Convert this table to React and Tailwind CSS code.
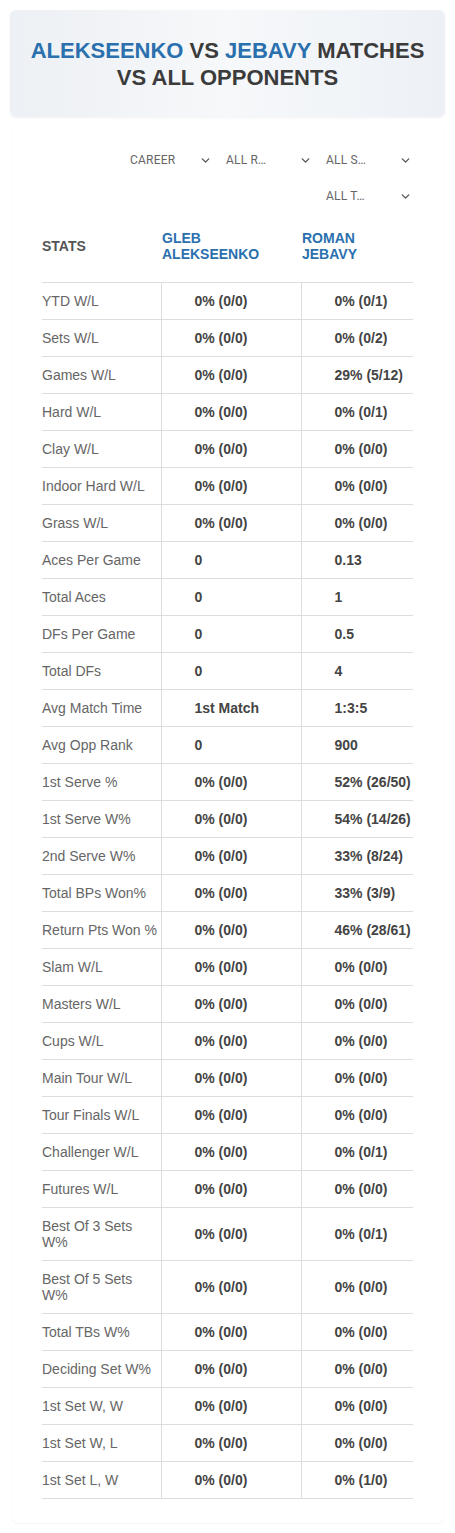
import React from "react";
import { ChevronDown } from "lucide-react";

const rows = [
  ["YTD W/L", "0% (0/0)", "0% (0/1)"],
  ["Sets W/L", "0% (0/0)", "0% (0/2)"],
  ["Games W/L", "0% (0/0)", "29% (5/12)"],
  ["Hard W/L", "0% (0/0)", "0% (0/1)"],
  ["Clay W/L", "0% (0/0)", "0% (0/0)"],
  ["Indoor Hard W/L", "0% (0/0)", "0% (0/0)"],
  ["Grass W/L", "0% (0/0)", "0% (0/0)"],
  ["Aces Per Game", "0", "0.13"],
  ["Total Aces", "0", "1"],
  ["DFs Per Game", "0", "0.5"],
  ["Total DFs", "0", "4"],
  ["Avg Match Time", "1st Match", "1:3:5"],
  ["Avg Opp Rank", "0", "900"],
  ["1st Serve %", "0% (0/0)", "52% (26/50)"],
  ["1st Serve W%", "0% (0/0)", "54% (14/26)"],
  ["2nd Serve W%", "0% (0/0)", "33% (8/24)"],
  ["Total BPs Won%", "0% (0/0)", "33% (3/9)"],
  ["Return Pts Won %", "0% (0/0)", "46% (28/61)"],
  ["Slam W/L", "0% (0/0)", "0% (0/0)"],
  ["Masters W/L", "0% (0/0)", "0% (0/0)"],
  ["Cups W/L", "0% (0/0)", "0% (0/0)"],
  ["Main Tour W/L", "0% (0/0)", "0% (0/0)"],
  ["Tour Finals W/L", "0% (0/0)", "0% (0/0)"],
  ["Challenger W/L", "0% (0/0)", "0% (0/1)"],
  ["Futures W/L", "0% (0/0)", "0% (0/0)"],
  ["Best Of 3 Sets W%", "0% (0/0)", "0% (0/1)"],
  ["Best Of 5 Sets W%", "0% (0/0)", "0% (0/0)"],
  ["Total TBs W%", "0% (0/0)", "0% (0/0)"],
  ["Deciding Set W%", "0% (0/0)", "0% (0/0)"],
  ["1st Set W, W", "0% (0/0)", "0% (0/0)"],
  ["1st Set W, L", "0% (0/0)", "0% (0/0)"],
  ["1st Set L, W", "0% (0/0)", "0% (1/0)"],
];

function Select({ label, first }) {
  return (
    <div className={`w-[95px] h-[36px] flex items-center justify-between pr-[4px] text-[12px] text-[#666] font-[family-name:Roboto,sans-serif] ${first ? "pl-[9px]" : "pl-[5px]"}`}>
      <span className="tracking-[0.2px]">{label}</span>
      <ChevronDown size={13} strokeWidth={2.5} className="text-[#555]" />
    </div>
  );
}

export default function App() {
  return (
    <div className="min-h-[1533px] bg-white px-[10px] pt-[10px] font-[family-name:'Liberation_Sans',Arial,sans-serif]">
      <div className="h-[107px] rounded-md bg-gradient-to-r from-[#edf0f4] via-[#f6f8fa] to-[#edf1f6] shadow-[0_1px_3px_rgba(0,0,0,0.05)] flex items-center justify-center">
        <h1 className="text-center text-[22px] leading-[27px] font-bold text-[#3b3b3b] uppercase">
          <span className="text-[#2a70ae]">Alekseenko</span> vs <span className="text-[#2a70ae]">Jebavy</span> Matches
          <br />
          vs All Opponents
        </h1>
      </div>

      <div className="mt-[8px] mx-[2px] rounded-md shadow-[0_1px_2px_rgba(0,0,0,0.05)] px-[30px] pt-[17px] pb-[24px]">
        <div className="flex flex-wrap justify-end gap-x-[5px] pr-[2px] w-[376px]">
          <Select label="CAREER" first />
          <Select label="ALL R…" />
          <Select label="ALL S…" />
          <div className="w-full flex justify-end">
            <Select label="ALL T…" />
          </div>
        </div>

        <table className="w-[371px] border-collapse text-[14px]">
          <colgroup>
            <col className="w-[119px]" />
            <col className="w-[140px]" />
            <col className="w-[112px]" />
          </colgroup>
          <thead>
            <tr className="h-[68px] border-b border-[#ddd] text-left align-middle">
              <th className="font-bold text-[#555] leading-[16px] pb-[3px]">STATS</th>
              <th className="font-bold text-[#2a70ae] leading-[16px] pl-[1px] pb-[3px]">GLEB<br />ALEKSEENKO</th>
              <th className="font-bold text-[#2a70ae] leading-[16px] pl-[1px] pb-[3px]">ROMAN<br />JEBAVY</th>
            </tr>
          </thead>
          <tbody>
            {rows.map(([label, a, b]) => (
              <tr key={label} className="border-b border-[#ddd]">
                <td className="py-[10px] leading-[16px] text-[#666]">{label}</td>
                <td className="py-[10px] pl-[33px] leading-[16px] font-bold text-[#444] border-l border-[#ddd]">{a}</td>
                <td className="py-[10px] pl-[33px] leading-[16px] font-bold text-[#444] border-l border-[#ddd]">{b}</td>
              </tr>
            ))}
          </tbody>
        </table>
      </div>
    </div>
  );
}
